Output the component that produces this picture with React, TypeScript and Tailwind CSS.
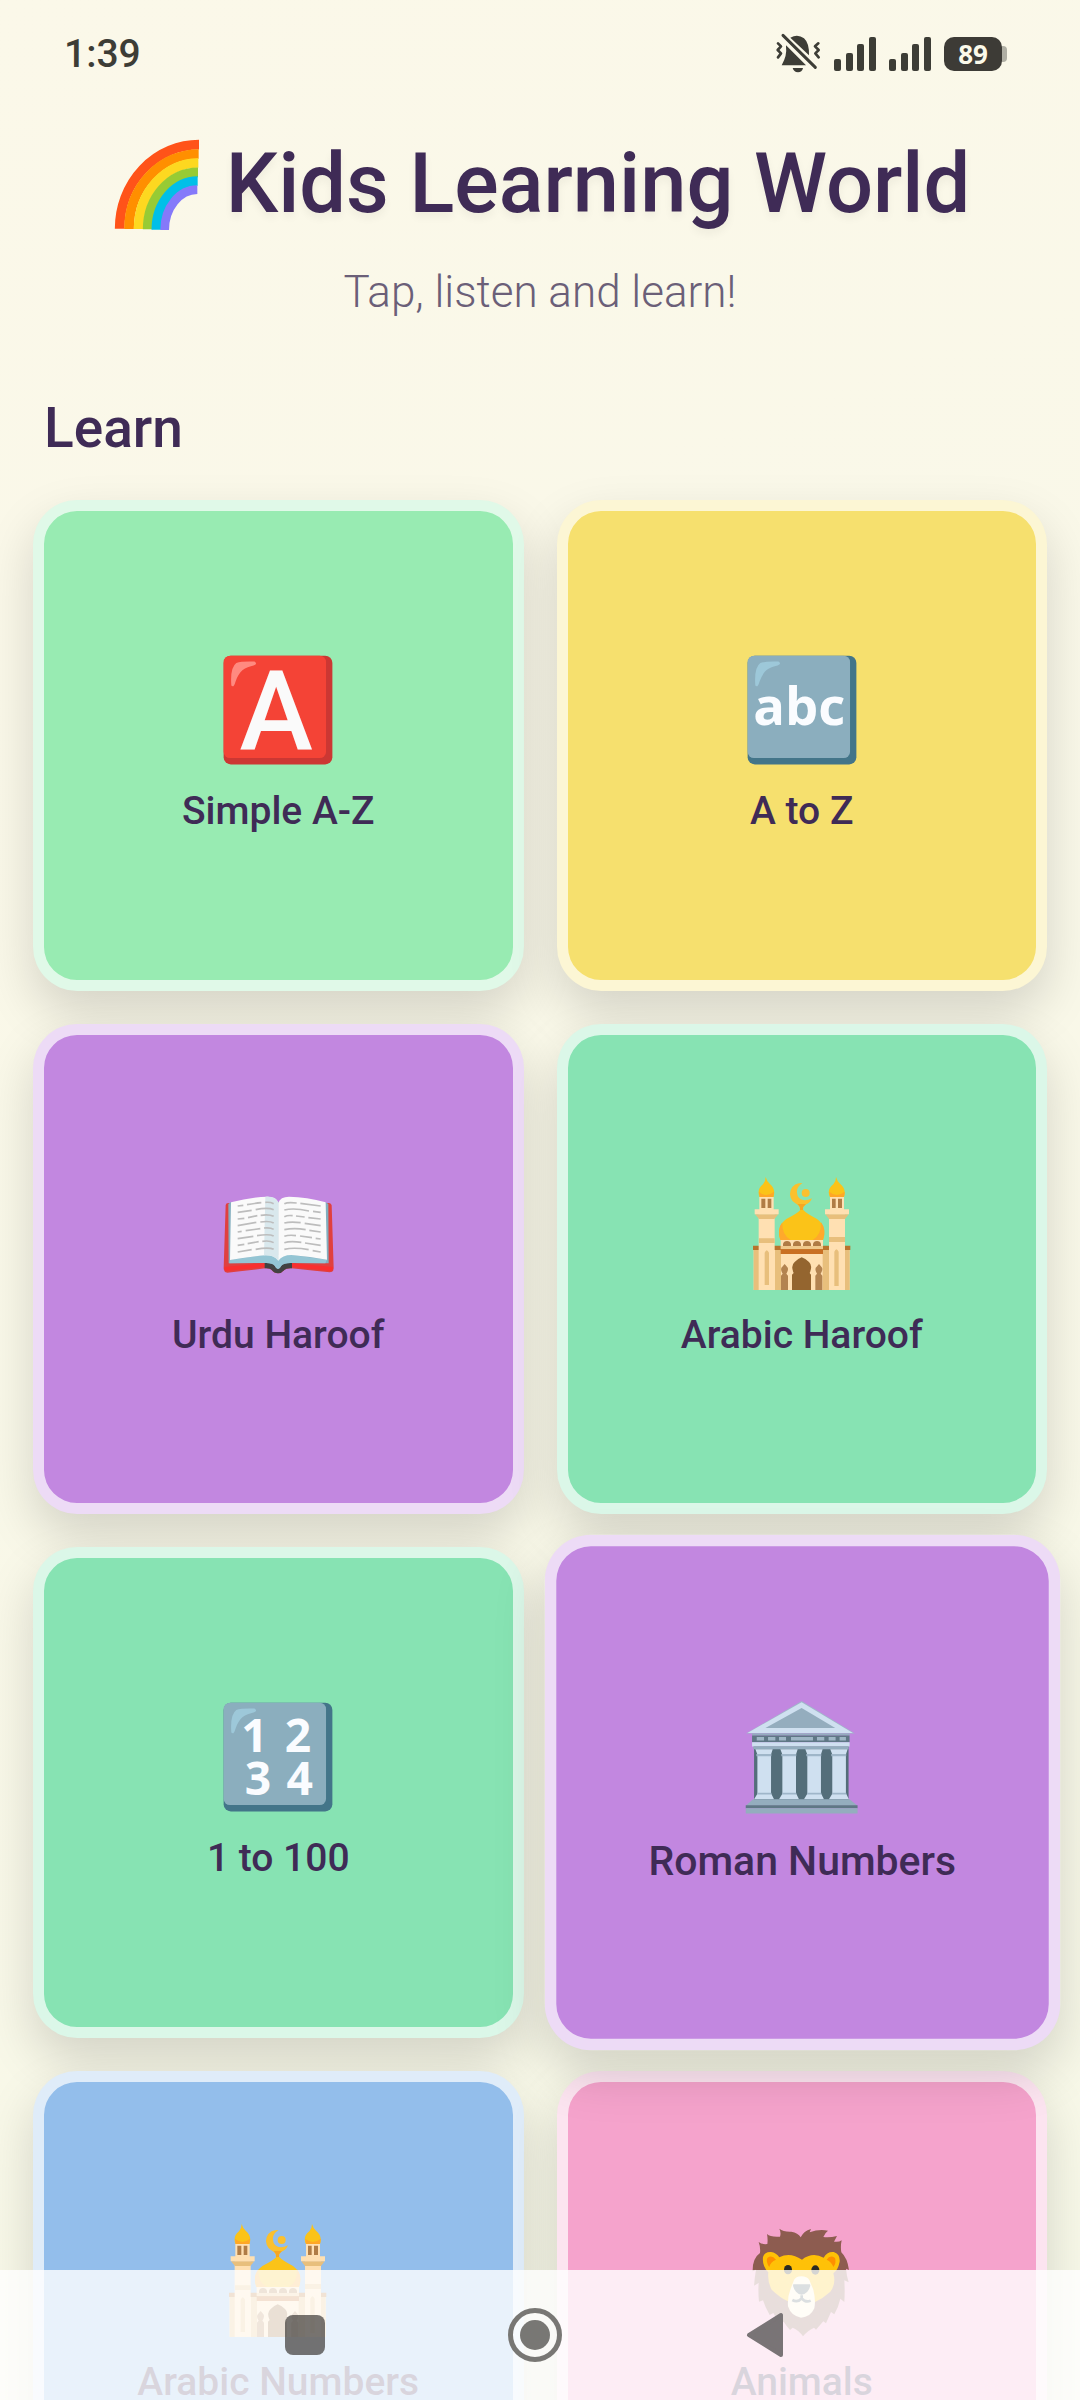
import React from 'react';

const INK = 'text-[#3f2b56]';

function RainbowIcon() {
  return (
    <svg viewBox="36 48 288 288" className="size-24 shrink-0" fill="none" strokeWidth="29" aria-hidden="true">
      <path d="M65 326A238 252 0 0 1 303 74" stroke="#ff5319" />
      <path d="M93 327A209 225 0 0 1 302 102" stroke="#ff8f00" />
      <path d="M122 327A179 198 0 0 1 301 129" stroke="#fdd820" />
      <path d="M149 328A151 171 0 0 1 300 157" stroke="#97cb34" />
      <path d="M175 329A124 146 0 0 1 299 183" stroke="#00bfe8" />
      <path d="M200 330A98 121 0 0 1 298 209" stroke="#8579fa" strokeWidth="26" />
    </svg>);

}

function Tile({ face, side, shine, children }: { face: string; side: string; shine: string; children: React.ReactNode }) {
  return (
    <svg viewBox="0 0 128 128" className="size-[116px]" aria-hidden="true">
      <rect x="4" y="4" width="120" height="120" rx="8" fill={side} />
      <rect x="4" y="4" width="113" height="113" rx="7" fill={face} />
      <path d="M12.500 37Q11 17 18 12Q24 10 38 10.500Q42 13 37 15C26 18 22 20 17 33Q15 40 12.500 37Z" fill={shine} />
      {children}
    </svg>);

}

function LetterIcon() {
  return (
    <Tile face="#f44336" side="#cc3733" shine="#ff8a80">
      <text x="62" y="108" textAnchor="middle" fontSize="122" className="font-['Roboto'] font-medium" fill="#fafafa">A</text>
    </Tile>);

}

function AbcIcon() {
  return (
    <Tile face="#8baebe" side="#437589" shine="#9dc8d9">
      <text x="61" y="80" textAnchor="middle" fontSize="58" className="font-['Open_Sans'] font-bold" fill="#fafcff">abc</text>
    </Tile>);

}

function NumbersIcon() {
  return (
    <Tile face="#8baebe" side="#437589" shine="#9dc8d9">
      <g fontSize="51" textAnchor="middle" className="font-['Open_Sans'] font-bold" fill="#fafcff">
        <text x="38" y="58">1</text>
        <text x="86" y="58">2</text>
        <text x="42" y="106">3</text>
        <text x="88" y="106">4</text>
      </g>
    </Tile>);

}

function BookIcon() {
  return (
    <svg viewBox="88 15 348 348" className="size-[116px]" aria-hidden="true">
      <path d="M99 290L105 102Q106 96 113 96H415Q422 97 423 103L429 292Q429 304 417 304L302 292Q286 291 280 298Q273 307 262 307Q250 307 244 298Q239 291 224 292L110 305Q98 304 99 290Z" fill="#e0403f" />
      <path d="M101 288L222 277V288L106 300Q100 298 101 288ZM427 288L304 277V288L420 300Q428 298 427 288Z" fill="#f92f2f" />
      <path d="M222 275H304V292Q286 291 280 298Q273 307 262 307Q250 307 244 298Q239 291 222 292Z" fill="#424242" />
      <path d="M113 99L121 93H404L413 99L414 277L304 276Q280 275 272 284Q267 294 262 294Q257 294 252 284Q245 275 222 276L114 277Z" fill="#82aebf" />
      <path d="M118 267L220 252H304L409 266L404 277L304 276Q280 275 272 284Q267 294 262 294Q257 294 252 284Q245 275 222 276L116 277Z" fill="#94c5d4" />
      <path d="M121 94Q178 78 231 77Q257 77 263 95V269Q251 252 224 253Q170 257 118 267Z" fill="#fafafa" />
      <path d="M224 77Q257 75 263 95V269Q247 251 220 253Z" fill="#d9e8ed" />
      <path d="M405 94Q348 78 295 77Q269 77 263 95V269Q275 252 302 252Q360 257 409 266Z" fill="#fafafa" />
      <g fill="none" stroke="#bdbdbd" strokeWidth="5">
        <path d="M141 105L158 103M169 101Q190 97 212 95M224 94Q240 93 249 98" />
        <path d="M141 124L183 118M195 116Q232 108 249 116" />
        <path d="M141 144L161 142M172 140L200 134M210 133Q235 129 249 136" />
        <path d="M141 164L197 154M209 153Q237 149 249 156" />
        <path d="M141 183L153 181M165 179L209 173M220 171Q240 169 249 175" />
        <path d="M141 203L188 196M199 194Q235 188 249 195" />
        <path d="M141 223L161 220M171 218L204 212M215 211Q238 208 249 215" />
        <path d="M141 243L183 236M195 235Q235 228 249 235" />
        <path d="M281 98Q291 93 318 96M329 97L390 105" />
        <path d="M281 117Q310 110 355 120M367 121L390 124" />
        <path d="M281 137Q291 132 306 134M316 135L342 138M353 140L390 144" />
        <path d="M281 156Q300 151 330 155M342 157L390 164" />
        <path d="M281 176Q310 170 345 176M356 178L390 183" />
        <path d="M281 196Q295 191 316 194M328 195L364 200M375 202L390 204" />
        <path d="M281 215Q299 209 332 214M343 216L390 223" />
        <path d="M281 235Q310 228 354 236M366 239L390 243" />
      </g>
    </svg>);

}

function MosqueIcon() {
  return (
    <svg viewBox="72 45 348 348" className="size-[116px]" aria-hidden="true">
      <path d="M101 262H389V387H101Z" fill="#ffe0b2" />
      <path d="M101 262H117V387H101ZM374 262H389V387H374ZM165 262H183V387H165ZM308 262H327V387H308Z" fill="#e8bf7c" />
      <path d="M99 254H391V267H99Z" fill="#b8732c" />
      <path d="M182 232H309V255H182Z" fill="#ffe0b2" />
      <path d="M182 255H309V265H182Z" fill="#f0c98b" />
      <path d="M182 265H309V279H182Z" fill="#c97023" />
      <path d="M116 160H164V387H116ZM327 160H375V387H327Z" fill="#ffe0b2" />
      <path d="M105 160H175L163 174H117ZM316 160H386L375 174H327ZM117 232H164V246H117ZM327 228H375V243H327Z" fill="#e8bf7c" />
      <path d="M104 145H176V160H104ZM315 145H387V160H315ZM118 108H161V145H118ZM330 108H372V145H330Z" fill="#ffe0b2" />
      <path d="M124 113H136V141H124ZM143 113H154V141H143ZM336 113H347V141H336ZM354 113H366V141H354Z" fill="#b07c45" />
      <path d="M134 372V275Q140 260 147 275V372ZM343 375V272Q349 257 356 272V375Z" fill="#e8bf7c" />
      <path d="M137 48Q140 60 149 68Q169 85 160 108H119Q109 86 129 70Q137 61 137 48ZM348 48Q351 60 360 68Q380 84 372 108H330Q319 86 340 70Q348 61 348 48Z" fill="#fbc318" />
      <path d="M117 92Q139 112 162 92L160 108H119ZM328 92Q350 112 374 92L372 108H330Z" fill="#ffa726" />
      <path d="M240 146Q239 133 226 127A33 33 0 0 1 247 66Q224 82 233 105Q247 127 276 112Q269 128 256 131Q249 136 249 146Z" fill="#fbc02d" />
      <circle cx="257" cy="96" r="12" fill="#fbc02d" />
      <path d="M233 129H258L249 138V149H240V138Z" fill="#f5a623" />
      <path d="M181 237Q168 197 199 174Q231 158 241 147H250Q260 158 291 174Q322 197 309 237Z" fill="#fbc318" />
      <path d="M181 237Q170 205 187 184Q185 221 212 237ZM309 237Q320 205 303 184Q305 221 278 237Z" fill="#ffa92c" />
      <path d="M189 255V249Q191 240 201 240Q211 240 213 249V255ZM219 255V249Q221 240 231 240Q241 240 243 249V255ZM249 255V249Q251 240 261 240Q271 240 273 249V255ZM279 255V249Q281 240 291 240Q301 240 303 249V255Z" fill="#b07c45" />
      <path d="M216 387V341L221 336Q211 314 224 303Q235 293 245 289Q256 293 267 303Q279 314 269 336L273 341V387Z" fill="#94652f" />
      <path d="M183 387V344L188 338Q179 323 187 317L194 309L201 317Q208 323 199 338L204 344V387ZM286 387V344L291 338Q282 323 290 317L297 309L304 317Q311 323 302 338L307 344V387Z" fill="#b38350" />
    </svg>);

}

function TempleIcon() {
  return (
    <svg viewBox="63 39 366 366" className="size-[116px]" aria-hidden="true">
      <path d="M102 195H386V360H102Z" fill="#546e7a" />
      <path d="M78 157L245 59L405 157Z" fill="#9fb6c9" />
      <path d="M82 155L245 63L399 155Z" fill="#cfe0f0" />
      <path d="M136 140L245 80L346 140Z" fill="#94adbe" />
      <path d="M96 157H389V163H96Z" fill="#94adbe" />
      <path d="M96 163H389V183H96Z" fill="#5f7785" />
      <path d="M110 167H132V178H110ZM144 167H166V178H144ZM177 167H198V178H177ZM213 167H279V178H213ZM291 167H313V178H291ZM326 167H347V178H326ZM359 167H378V178H359Z" fill="#9fb6c5" />
      <path d="M96 183H389V196H96Z" fill="#cfe0f0" />
      <path d="M99 196H386V204H99Z" fill="#94adbe" />
      {[0, 75, 150, 225].map((x) =>
      <g key={x} transform={`translate(${x} 0)`}>
          <path d="M106 204H158L153 220V336L162 354H102L112 338V220Z" fill="#cfe0f0" />
          <path d="M109 218H154V225H109ZM111 335H154V340H111Z" fill="#9fb6c9" />
        </g>
      )}
      <path d="M99 354H389L413 374H77Z" fill="#94adbe" />
      <path d="M77 372H413V381H77Z" fill="#5f7785" />
      <path d="M77 381H413V397H77Z" fill="#94adbe" />
    </svg>);

}

function LionIcon() {
  return (
    <svg viewBox="42 33 348 348" className="size-[116px]" aria-hidden="true">
      <path d="M148 50Q160 60 184 59Q204 62 212 76Q221 57 243 51L239 61Q268 50 294 56Q286 61 280 75Q300 77 321 72L312 89Q327 91 335 85Q331 103 334 121Q352 138 357 174L348 170Q350 192 356 211L343 205Q345 240 343 270L331 260Q325 286 313 307L303 300Q295 318 288 334L280 328Q268 342 258 353L252 347Q232 356 219 373Q207 355 188 347L180 354Q168 340 161 329L148 334Q138 317 130 303L119 309Q105 285 99 265L87 269Q84 240 86 213L72 221Q74 195 78 173L68 178Q67 139 90 123Q92 106 86 90Q96 98 112 96Q114 82 111 66Q121 76 150 74Q154 62 148 50Z" fill="#8d5c50" />
      <path d="M99 135Q104 119 123 120Q139 122 148 136Q180 119 216 143Q247 119 281 137Q291 118 311 120Q331 126 329 149Q324 174 310 184Q319 216 301 239Q278 260 255 270L174 268Q150 257 125 233Q112 210 115 181Q96 162 99 135Z" fill="#ffc107" />
      <path d="M112 138Q125 127 138 143Q121 150 118 165Q107 150 112 138ZM290 143Q300 127 315 138Q320 152 310 165Q305 150 290 143Z" fill="#ff8f00" />
      <path d="M192 204Q197 194 214 193Q231 193 238 204L250 233Q258 265 253 289Q241 316 213 317Q183 312 174 283Q172 254 181 233Z" fill="#fff3d6" />
      <path d="M190 217H240Q243 224 232 239Q214 257 198 239Q187 225 190 217Z" fill="#4b6067" />
      <path d="M215 250V260M187 264Q203 273 215 259Q227 273 242 266" fill="none" stroke="#4b6067" strokeWidth="8" />
      <ellipse cx="174" cy="173" rx="12" ry="14" fill="#2b2b22" />
      <ellipse cx="256" cy="174" rx="12" ry="14" fill="#2b2b22" />
    </svg>);

}

function MutedBellIcon() {
  return (
    <svg viewBox="75 36 138 126" className="h-[42px] w-[46px]" aria-hidden="true">
      <path d="M108 78Q112 102 95 133H168L108 73ZM121 50Q143 38 162 52Q178 66 177 103Z" fill="#3d3d36" />
      <path d="M128 141H159Q156 154 144 154Q131 153 128 141Z" fill="#3d3d36" />
      <path d="M99 43L196 139" stroke="#3d3d36" strokeWidth="9" strokeLinecap="round" />
      <path d="M84 67L93 76L83 87L93 97L84 109M205 67L195 76L206 87L196 97L206 109" fill="none" stroke="#3d3d36" strokeWidth="8" strokeLinecap="round" strokeLinejoin="round" />
    </svg>);

}

function SignalIcon() {
  return (
    <svg viewBox="0 0 42 34" className="h-[34px] w-[42px]" fill="#3d3d36" aria-hidden="true">
      <rect x="0" y="22" width="7" height="12" rx="2" />
      <rect x="12" y="16" width="7" height="18" rx="2" />
      <rect x="23" y="7" width="7" height="27" rx="2" />
      <rect x="35" y="0" width="7" height="34" rx="2" />
    </svg>);

}

const cards = [
{ title: 'Simple A-Z', icon: <LetterIcon />, color: 'bg-[#98ebb2]' },
{ title: 'A to Z', icon: <AbcIcon />, color: 'bg-[#f6e06e]' },
{ title: 'Urdu Haroof', icon: <BookIcon />, color: 'bg-[#c287e0]' },
{ title: 'Arabic Haroof', icon: <MosqueIcon />, color: 'bg-[#87e3b3]' },
{ title: '1 to 100', icon: <NumbersIcon />, color: 'bg-[#87e3b3]' },
{ title: 'Roman Numbers', icon: <TempleIcon />, color: 'bg-[#c287e0]', active: true },
{ title: 'Arabic Numbers', icon: <MosqueIcon />, color: 'bg-[#93beeb]' },
{ title: 'Animals', icon: <LionIcon />, color: 'bg-[#f5a3cc]' }];


function StatusBar() {
  return (
    <div className="flex h-[108px] items-center justify-between pr-[73px] pl-16">
      <span className="text-[39px] leading-[48px] font-medium text-[#3d3d36]">1:39</span>
      <div className="flex items-center gap-[13px]">
        <MutedBellIcon />
        <SignalIcon />
        <SignalIcon />
        <div className="flex items-center">
          <span className="flex h-[34px] w-[58px] items-center justify-center rounded-[10px] bg-[#3d3b36] font-['Noto_Sans'] text-[26px] leading-[32px] font-bold text-[#fbf9ea]">
            89
          </span>
          <span className="h-4 w-[5px] rounded-r-[4px] bg-[#b0afa4]"></span>
        </div>
      </div>
    </div>);

}

function NavBar() {
  return (
    <nav className="absolute inset-x-0 bottom-0 flex h-[130px] items-center justify-center gap-[170px] bg-white/80 pr-[10px]">
      <button type="button" aria-label="Recent apps" className="flex size-[60px] items-center justify-center">
        <span className="size-10 rounded-[8px] bg-[#3d3b38]/70"></span>
      </button>
      <button type="button" aria-label="Home" className="flex size-[60px] items-center justify-center">
        <svg viewBox="0 0 54 54" className="size-[54px]" fill="#787774" aria-hidden="true">
          <circle cx="27" cy="27" r="24.500" fill="none" stroke="#787774" strokeWidth="5" />
          <circle cx="27" cy="27" r="15" />
        </svg>
      </button>
      <button type="button" aria-label="Back" className="flex size-[60px] items-center justify-center">
        <svg viewBox="0 0 38 46" className="h-[46px] w-[38px]" aria-hidden="true">
          <path d="M35 3V43L3 23Z" fill="#797476" stroke="#797476" strokeWidth="4" strokeLinejoin="round" />
        </svg>
      </button>
    </nav>);

}

export default function App() {
  return (
    <div className="relative h-screen overflow-hidden bg-linear-160 from-[#fbf8e9] to-[#f7f8e8] font-['Roboto',sans-serif]">
      <StatusBar />
      <header className="flex flex-col items-center gap-[34px] pt-[28px]">
        <h1 className={`flex items-center gap-5 text-[83px] leading-[96px] font-medium text-shadow-[0_5px_8px_rgb(0_0_0/0.05)] ${INK}`}>
          <RainbowIcon />
          Kids Learning World
        </h1>
        <p className="text-[44px] leading-[52px] font-light text-[#6b5f78]">Tap, listen and learn!</p>
      </header>

      <main className="px-[33px] pt-[78px]">
        <h2 className={`pl-[11px] text-[55px] leading-[64px] font-medium ${INK}`}>Learn</h2>
        <div className="mt-10 grid grid-cols-2 gap-[33px]">
          {cards.map((card) =>
          <button
            key={card.title}
            type="button"
            className={`flex aspect-square flex-col items-center justify-center gap-4 rounded-[44px] border-[11px] border-white/70 shadow-[0_22px_50px_rgb(0_0_0/0.15)] ${card.color} ${card.active ? 'scale-105' : ''}`}>

              {card.icon}
              <span className={`text-[39px] leading-[54px] font-medium ${INK}`}>{card.title}</span>
            </button>
          )}
        </div>
      </main>
      <NavBar />
    </div>);

}
